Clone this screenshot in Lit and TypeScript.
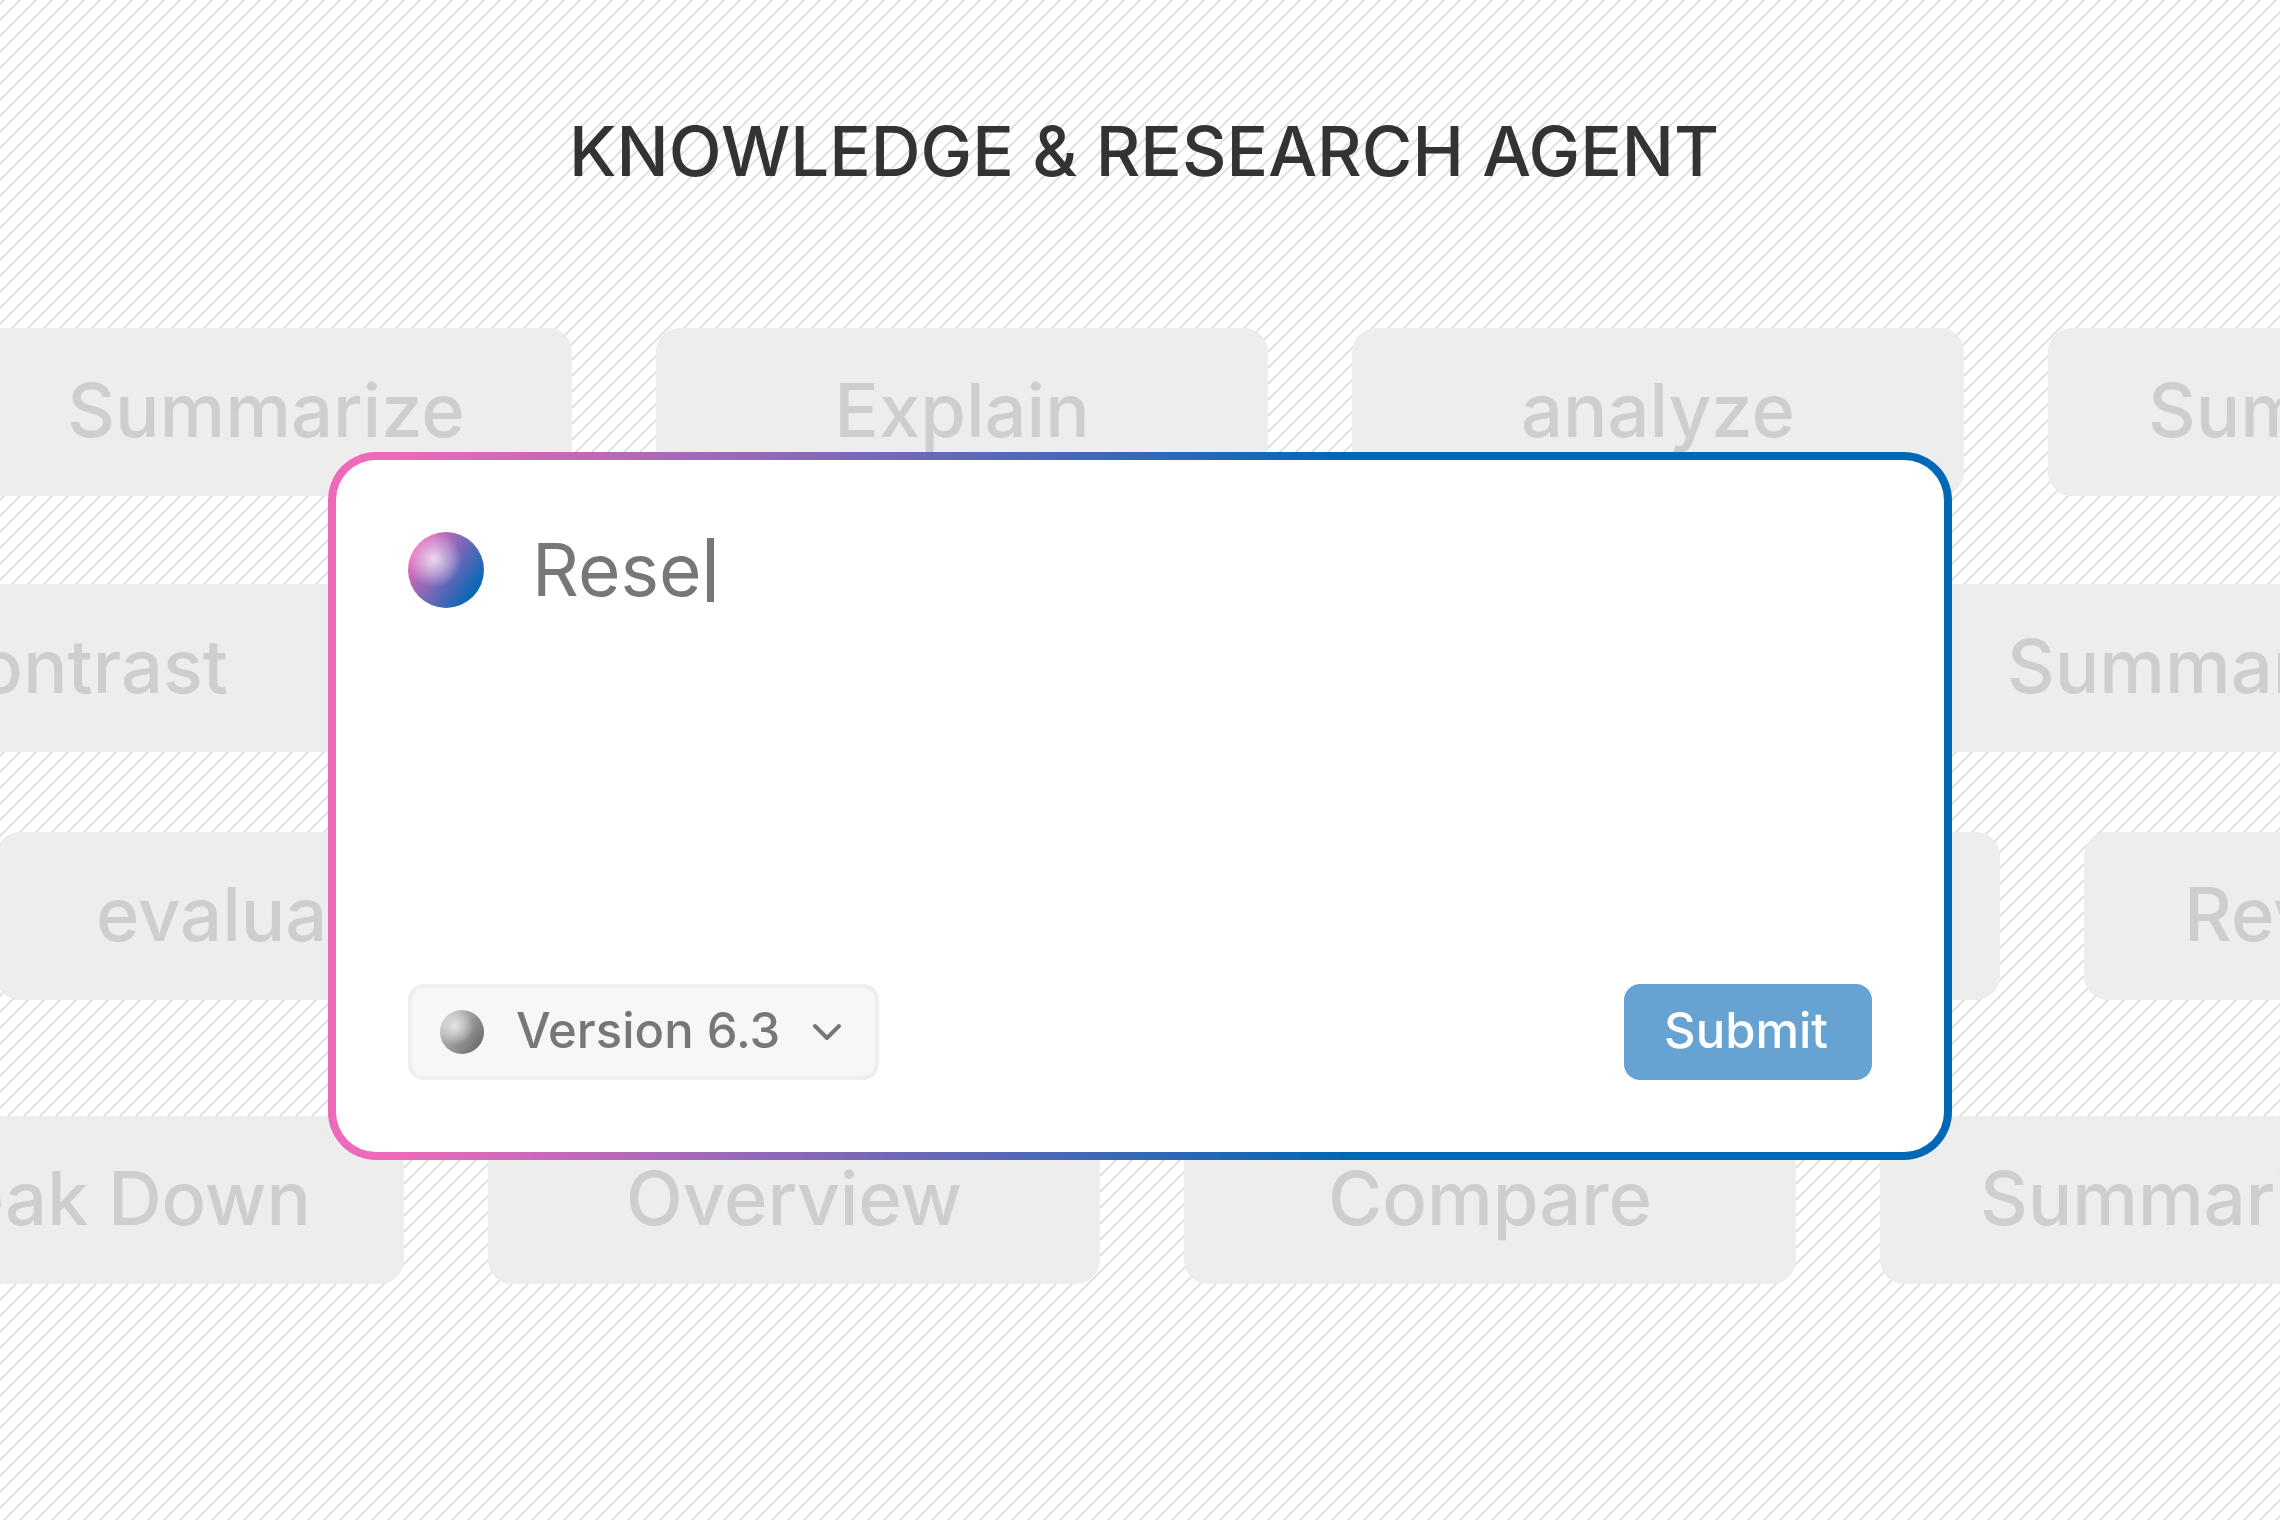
import { LitElement, html, css, svg } from "lit";
import { customElement, state } from "lit/decorators.js";
import { styleMap } from "lit/directives/style-map.js";

interface ChipRow {
  offset: number;
  space: "first" | "loose" | "near" | "far";
  chips: { text: string; align?: "start" | "end" }[];
}

const ROWS: ChipRow[] = [
  {
    offset: -40,
    space: "first",
    chips: [{ text: "Summarize" }, { text: "Explain" }, { text: "analyze" }, { text: "Summarize", align: "start" }],
  },
  {
    offset: -256,
    space: "loose",
    chips: [
      { text: "Contrast", align: "end" },
      { text: "" },
      { text: "" },
      { text: "Summarize", align: "start" },
    ],
  },
  {
    offset: -4,
    space: "near",
    chips: [{ text: "evaluate", align: "start" }, { text: "" }, { text: "" }, { text: "Review", align: "start" }],
  },
  {
    offset: -208,
    space: "far",
    chips: [{ text: "Break Down" }, { text: "Overview" }, { text: "Compare" }, { text: "Summarize", align: "start" }],
  },
];

@customElement("app-root")
export class AppRoot extends LitElement {
  @state() private prompt = "Rese";

  static styles = css`
    :host {
      display: block;
      font-family: Inter, "Liberation Sans", sans-serif;
    }
    .page {
      box-sizing: border-box;
      min-height: 100vh;
      overflow: hidden;
      padding: 106px 0 0;
      background: #fff
        linear-gradient(
          135deg,
          #fff 6%,
          #dcdcdc 11%,
          #dcdcdc 14%,
          #fff 19%,
          #fff 56%,
          #dcdcdc 61%,
          #dcdcdc 64%,
          #fff 69%
        );
      background-size: 16px 16px;
    }
    .title {
      margin: 0;
      padding-left: 8px;
      text-align: center;
      font-size: 69px;
      font-weight: 500;
      line-height: 90px;
      color: #333;
    }
    .stage {
      display: grid;
      grid-template-columns: minmax(0, 1fr);
      align-items: start;
      margin-top: 132px;
    }
    .rows,
    .card {
      grid-area: 1 / 1;
    }
    .row {
      display: flex;
      gap: 84px;
      margin: 0;
      padding: 0;
      list-style: none;
    }
    .loose {
      gap: 109px;
      margin-top: 88px;
    }
    .near {
      margin-top: 80px;
    }
    .far {
      margin-top: 116px;
    }
    .chip {
      flex: none;
      box-sizing: border-box;
      display: flex;
      align-items: center;
      justify-content: center;
      width: 612px;
      height: 168px;
      padding: 0 100px 4px;
      border-radius: 24px;
      background: #ededed;
      color: #cecece;
      font-size: 74px;
      font-weight: 500;
      line-height: 90px;
      white-space: nowrap;
    }
    .start {
      justify-content: flex-start;
    }
    .end {
      justify-content: flex-end;
      padding-right: 128px;
    }
    .card {
      position: relative;
      box-sizing: border-box;
      display: flex;
      flex-direction: column;
      justify-content: space-between;
      gap: 376px;
      margin: 124px 328px 0;
      padding: 72px;
      border: 8px solid transparent;
      border-radius: 48px;
      background:
        linear-gradient(#fff, #fff) padding-box,
        linear-gradient(90deg, #ee69b9 4%, #0068b6 63%) border-box;
    }
    .ask {
      display: flex;
      align-items: center;
      height: 76px;
    }
    .orb {
      flex: none;
      width: 76px;
      height: 76px;
      border-radius: 50%;
      margin-right: 48px;
      background:
        radial-gradient(circle at 34% 36%, #f1e4f5e6 0%, #f1e4f500 40%),
        linear-gradient(125deg, #ee69b9 14%, #0068b6 86%);
    }
    .prompt {
      field-sizing: content;
      border: 0;
      margin: 0;
      padding: 0;
      outline: none;
      background: none;
      font: 400 73px / 76px Inter, "Liberation Sans", sans-serif;
      color: #777;
    }
    .caret {
      width: 7px;
      height: 64px;
      margin-left: 5px;
      background: #777;
    }
    .actions {
      display: flex;
      align-items: center;
      justify-content: space-between;
    }
    .version {
      box-sizing: border-box;
      display: flex;
      align-items: center;
      height: 96px;
      padding: 0 33px 0 28px;
      border: 4px solid #eee;
      border-radius: 16px;
      background: #f7f7f7;
      color: #777;
    }
    .dot {
      width: 44px;
      height: 44px;
      border-radius: 50%;
      margin-right: 32px;
      background:
        radial-gradient(circle at 34% 36%, #ebebebe6 0%, #ebebeb00 48%),
        linear-gradient(125deg, #c0c0c0 14%, #707070 86%);
    }
    .select {
      appearance: none;
      field-sizing: content;
      border: 0;
      margin: 0;
      padding: 0 0 2px;
      outline: none;
      background: none;
      color: inherit;
      font: 500 49px / 64px Inter, "Liberation Sans", sans-serif;
    }
    .chevron {
      display: block;
      width: 30px;
      height: 20px;
      margin-left: 32px;
    }
    .submit {
      width: 248px;
      height: 96px;
      border: 0;
      padding: 0 4px 2px 0;
      border-radius: 16px;
      background: #66a3d3;
      color: #fff;
      font: 500 49px / 64px Inter, "Liberation Sans", sans-serif;
    }
  `;

  private onInput(e: InputEvent) {
    this.prompt = (e.target as HTMLInputElement).value;
  }

  render() {
    return html`
      <main class="page">
        <h1 class="title">KNOWLEDGE &amp; RESEARCH AGENT</h1>
        <div class="stage">
          <div class="rows">
            ${ROWS.map(
              (row) => html`
                <ul class="row ${row.space}" style=${styleMap({ marginLeft: `${row.offset}px` })}>
                  ${row.chips.map((c) => html`<li class="chip ${c.align ?? ""}">${c.text}</li>`)}
                </ul>
              `,
            )}
          </div>
          <form class="card" @submit=${(e: Event) => e.preventDefault()}>
            <div class="ask">
              <span class="orb"></span>
              <input class="prompt" type="text" aria-label="Prompt" .value=${this.prompt} @input=${this.onInput} />
              <span class="caret"></span>
            </div>
            <div class="actions">
              <label class="version">
                <span class="dot"></span>
                <select class="select" aria-label="Model version">
                  <option>Version 6.3</option>
                </select>
                <svg class="chevron" viewBox="0 0 30 20" fill="none" aria-hidden="true">
                  ${svg`<path d="M3 4 L15 16 L27 4" stroke="currentColor" stroke-width="4" stroke-linecap="round" stroke-linejoin="round" />`}
                </svg>
              </label>
              <button class="submit" type="submit">Submit</button>
            </div>
          </form>
        </div>
      </main>
    `;
  }
}
